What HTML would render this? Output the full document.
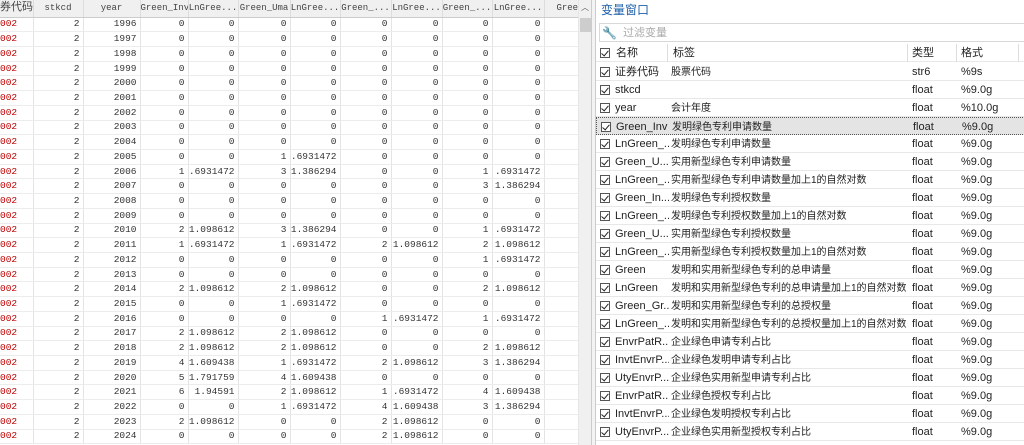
<!DOCTYPE html><html><head><meta charset="utf-8"><style>
*{margin:0;padding:0;box-sizing:border-box}
body{width:1024px;height:445px;overflow:hidden;background:#fff;font-family:"Liberation Sans","Noto Sans CJK SC",sans-serif;position:relative}
#L{position:absolute;left:0;top:0;width:578px;height:445px;overflow:hidden}
table.d{border-collapse:collapse;font-family:"Liberation Mono","Noto Sans CJK SC",monospace;font-size:9.5px;color:#333;table-layout:fixed;width:584px}
table.d td{height:14.73px;border-right:1px solid #e4e4e4;border-bottom:1px solid #ececec;text-align:right;padding:0 3px 0 0;white-space:nowrap;overflow:hidden;line-height:12px}
table.d tr.h td{height:17px;background:#f0f0f0;color:#444;text-align:center;border-right:1px solid #ddd;border-bottom:1px solid #ccc;padding:0;font-size:9px}
table.d td.c{color:#c00000;text-align:left;padding-left:0}
#sb{position:absolute;left:578px;top:0;width:13px;height:445px;background:#f0f0f0;border-left:1px solid #e6e6e6}
#sb .t{position:absolute;left:1px;top:18px;width:11px;height:14px;background:#cdcdcd}
#sb .a{position:absolute;left:2px;top:2px;font-size:8px;color:#555}
#gap{position:absolute;left:591px;top:0;width:4px;height:445px;background:#f3f3f3;border-left:1px solid #ccc}
#R{position:absolute;left:595px;top:0;width:429px;height:445px;border-left:1px solid #ccc;font-size:11px;color:#222}
#R .ti{position:absolute;left:5px;top:2px;color:#1e5fa8;font-size:12px;line-height:16px}
#R .fl{position:absolute;left:3px;top:23px;width:426px;height:19px;border:1px solid #d8d8d8}
#R .fl span{position:absolute;left:23px;top:2px;color:#aaa;font-size:11px;line-height:14px}
.row{position:absolute;left:0;width:429px;height:18px;border-bottom:1px solid #e8e8e8}
.row span{position:absolute;top:2px;white-space:nowrap;line-height:14px;height:14px;font-size:11px}
.row span.lb{font-size:10px;width:236px;overflow:hidden;top:3px}
.cb{position:absolute;left:4px;top:4px;width:10px;height:10px;border:1px solid #555;background:#fff}
.cb:after{content:"";position:absolute;left:2px;top:0px;width:3px;height:6px;border:solid #222;border-width:0 1.5px 1.5px 0;transform:rotate(40deg)}
.hd span.dv{top:0;width:1px;height:18px;background:#ddd}
.sel{background:#e4e4e4;border:1px dotted #555}
</style></head><body>
<div id="L"><table class="d">
<colgroup><col style="width:33px"><col style="width:50px"><col style="width:57px"><col style="width:48px"><col style="width:50px"><col style="width:52px"><col style="width:50px"><col style="width:51px"><col style="width:51px"><col style="width:50px"><col style="width:52px"><col style="width:40px"></colgroup>
<tr class="h"><td style="text-align:left;font-size:11px">券代码</td><td>stkcd</td><td>year</td><td>Green_Inv</td><td>LnGree...</td><td>Green_Uma</td><td>LnGree...</td><td>Green_...</td><td>LnGree...</td><td>Green_...</td><td>LnGree...</td><td style="text-align:right">Greer</td></tr>
<tbody id="tb"></tbody></table></div>
<div id="sb"><div class="a">︿</div><div class="t"></div></div>
<div id="gap"></div>
<div id="R">
<div class="ti">变量窗口</div>
<div style="position:absolute;left:6px;top:26px;font-size:12px;color:#555">🔧</div>
<div class="fl"><span>过滤变量</span></div>
<div id="rows"></div>
</div>
<script>
var z="0 0 0 0 0 0 0 0".split(" ");
var D={2005:"0 0 1 .6931472 0 0 0 0",2006:"1 .6931472 3 1.386294 0 0 1 .6931472",2007:"0 0 0 0 0 0 3 1.386294",2010:"2 1.098612 3 1.386294 0 0 1 .6931472",2011:"1 .6931472 1 .6931472 2 1.098612 2 1.098612",2012:"0 0 0 0 0 0 1 .6931472",2014:"2 1.098612 2 1.098612 0 0 2 1.098612",2015:"0 0 1 .6931472 0 0 0 0",2016:"0 0 0 0 1 .6931472 1 .6931472",2017:"2 1.098612 2 1.098612 0 0 0 0",2018:"2 1.098612 2 1.098612 0 0 2 1.098612",2019:"4 1.609438 1 .6931472 2 1.098612 3 1.386294",2020:"5 1.791759 4 1.609438 0 0 0 0",2021:"6 1.94591 2 1.098612 1 .6931472 4 1.609438",2022:"0 0 1 .6931472 4 1.609438 3 1.386294",2023:"2 1.098612 0 0 2 1.098612 0 0",2024:"0 0 0 0 2 1.098612 0 0"};
var h="";for(var y=1996;y<=2024;y++){var v=D[y]?D[y].split(" "):z;h+='<tr><td class="c">002</td><td>2</td><td>'+y+'</td>';v.forEach(function(x){h+='<td>'+x+'</td>'});h+='<td></td></tr>';}
document.getElementById("tb").innerHTML=h;
var R=[["证券代码","股票代码","str6","%9s"],["stkcd","","float","%9.0g"],["year","会计年度","float","%10.0g"],["Green_Inv","发明绿色专利申请数量","float","%9.0g"],["LnGreen_...","发明绿色专利申请数量","float","%9.0g"],["Green_U...","实用新型绿色专利申请数量","float","%9.0g"],["LnGreen_...","实用新型绿色专利申请数量加上1的自然对数","float","%9.0g"],["Green_In...","发明绿色专利授权数量","float","%9.0g"],["LnGreen_...","发明绿色专利授权数量加上1的自然对数","float","%9.0g"],["Green_U...","实用新型绿色专利授权数量","float","%9.0g"],["LnGreen_...","实用新型绿色专利授权数量加上1的自然对数","float","%9.0g"],["Green","发明和实用新型绿色专利的总申请量","float","%9.0g"],["LnGreen","发明和实用新型绿色专利的总申请量加上1的自然对数","float","%9.0g"],["Green_Gr...","发明和实用新型绿色专利的总授权量","float","%9.0g"],["LnGreen_...","发明和实用新型绿色专利的总授权量加上1的自然对数","float","%9.0g"],["EnvrPatR...","企业绿色申请专利占比","float","%9.0g"],["InvtEnvrP...","企业绿色发明申请专利占比","float","%9.0g"],["UtyEnvrP...","企业绿色实用新型申请专利占比","float","%9.0g"],["EnvrPatR...","企业绿色授权专利占比","float","%9.0g"],["InvtEnvrP...","企业绿色发明授权专利占比","float","%9.0g"],["UtyEnvrP...","企业绿色实用新型授权专利占比","float","%9.0g"]];
var o='<div class="row hd" style="top:44px;background:#fff"><div class="cb" style="border-width:1.5px"></div><span style="left:20px">名称</span><span class="dv" style="left:71px"></span><span style="left:77px">标签</span><span class="dv" style="left:311px"></span><span style="left:316px">类型</span><span class="dv" style="left:360px"></span><span style="left:365px">格式</span><span class="dv" style="left:422px"></span></div>';
R.forEach(function(r,i){o+='<div class="row'+(i==3?' sel':'')+'" style="top:'+(63+i*18)+'px"><div class="cb"></div><span style="left:19px;width:54px;overflow:hidden">'+r[0]+'</span><span class="lb" style="left:75px">'+r[1]+'</span><span style="left:316px">'+r[2]+'</span><span style="left:365px">'+r[3]+'</span></div>'});
document.getElementById("rows").innerHTML=o;
</script>
</body></html>
